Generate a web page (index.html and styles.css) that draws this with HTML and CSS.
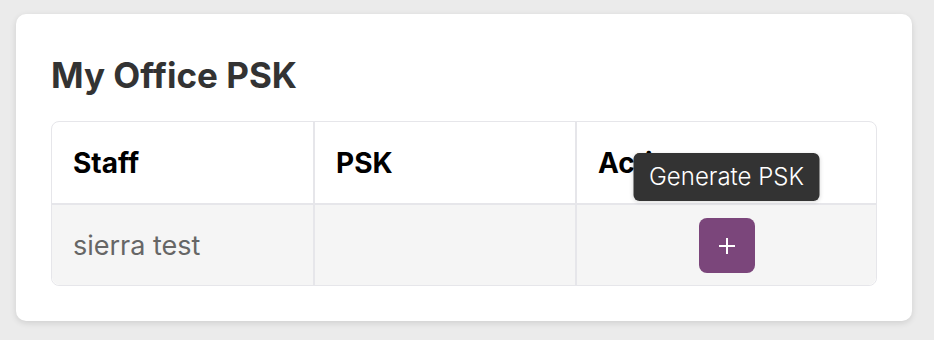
FILE: index.html
```html
<!DOCTYPE html>
<html>
<head>
<meta charset="utf-8">
<link rel="stylesheet" href="styles.css">
</head>
<body>
<div class="card">
  <h1 class="title">My Office PSK</h1>
  <div class="table">
    <div class="row head">
      <div class="cell c1">Staff</div>
      <div class="cell c2">PSK</div>
      <div class="cell c3">Actions</div>
    </div>
    <div class="row body">
      <div class="cell c1 name">sierra test</div>
      <div class="cell c2"></div>
      <div class="cell c3 action">
        <div class="btn-wrap">
          <button class="btn" aria-label="Generate PSK">
            <svg width="18" height="18" viewBox="0 0 18 18"><path d="M9 1v16M1 9h16" stroke="#fff" stroke-width="2" fill="none"/></svg>
          </button>
          <div class="tooltip">Generate PSK</div>
        </div>
      </div>
    </div>
  </div>
</div>
</body>
</html>
```
FILE: styles.css
```css
html, body { margin: 0; padding: 0; }
body {
  background: #ebebeb;
  font-family: Inter, "Noto Sans", sans-serif;
  padding: 14px 22px 20px 16px;
}
.card {
  background: #fff;
  width: 896px;
  box-sizing: border-box;
  border-radius: 10px;
  padding: 40px 35px 35px 35px;
  box-shadow: 0 2px 6px rgba(0,0,0,0.12);
}
.title {
  margin: 0 0 25px 0;
  font-size: 35px;
  line-height: 42px;
  font-weight: 700;
  color: #333;
}
.table {
  border: 1px solid #e6e6ea;
  border-radius: 8px;
}
.row {
  display: grid;
  grid-template-columns: 263px 262px 1fr;
}
.head { height: 81px; border-bottom: 2px solid #e6e6ea; }
.body { height: 80px; background: #f5f5f5; border-radius: 0 0 8px 8px; }
.cell {
  display: flex;
  align-items: center;
  padding: 0 21px;
  border-right: 2px solid #e6e6ea;
}
.c3 { border-right: none; }
.head .cell {
  font-size: 28px;
  font-weight: 700;
  color: #000;
}
.name {
  font-size: 27px;
  color: #666;
  font-weight: 400;
}
.action { justify-content: center; padding: 0; }
.btn-wrap { position: relative; }
.btn {
  width: 56px;
  height: 55px;
  border: none;
  border-radius: 8px;
  background: #7b467b;
  display: flex;
  align-items: center;
  justify-content: center;
  padding: 0;
  margin-top: 1px;
}
.tooltip {
  position: absolute;
  bottom: calc(100% + 16px);
  left: 50%;
  transform: translateX(-50%);
  background: #333;
  color: #fff;
  font-size: 24px;
  font-weight: 300;
  line-height: 48px;
  height: 48px;
  padding: 0 16px;
  border-radius: 6px;
  white-space: nowrap;
  box-shadow: 0 1px 4px rgba(0,0,0,0.15);
}
```
